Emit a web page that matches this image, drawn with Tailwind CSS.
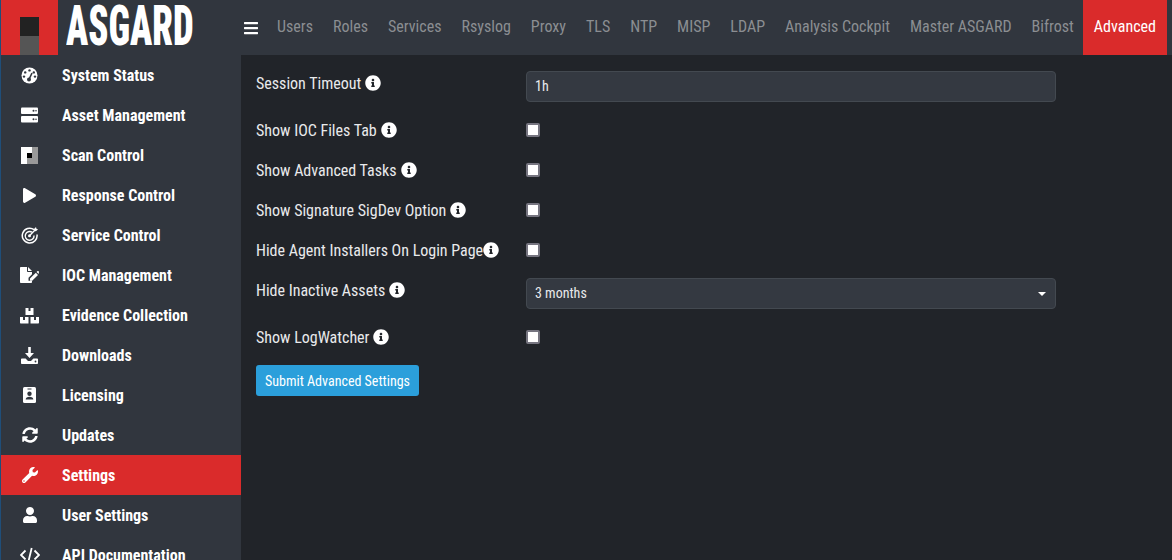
<!DOCTYPE html>
<html lang="en">
  <head>
    <meta charset="UTF-8" />
    <title>ASGARD Settings</title>
    <script src="https://cdn.jsdelivr.net/npm/@tailwindcss/browser@4"></script>
  </head>
  <body class="bg-[#212429] font-['Roboto',sans-serif] [font-stretch:75%] h-[560px] overflow-hidden flex">
    <!-- Sidebar -->
    <aside class="w-[241px] h-[560px] shrink-0 bg-[#31363e] border-l border-[#1f4e79]">
      <div class="h-[55px] flex">
        <div class="w-[57px] h-[55px] shrink-0 bg-[#da2b2b] flex justify-center items-end">
          <div class="w-[19px] h-[38px] flex flex-col">
            <div class="h-[19px] bg-[#222222]"></div>
            <div class="h-[19px] bg-[#555555]"></div>
          </div>
        </div>
        <div class="text-white font-black text-[56px] leading-[52px] h-[55px] w-[170px] shrink-0 whitespace-nowrap ml-2 origin-left scale-x-[0.655]">ASGARD</div>
      </div>
      <nav class="text-white font-bold text-base h-[505px] overflow-hidden">
        <a class="h-10 flex items-center">
          <span class="w-[61px] pr-1 flex justify-center">
            <svg class="w-[17px] h-[17px]" viewBox="0 0 17 17"><circle cx="8.5" cy="8.5" r="8" fill="#fff"/><circle cx="8.5" cy="3.4" r="1.2" fill="#31363e"/><circle cx="4.2" cy="5.4" r="1.2" fill="#31363e"/><circle cx="12.8" cy="5.4" r="1.2" fill="#31363e"/><circle cx="3" cy="9.6" r="1.2" fill="#31363e"/><circle cx="14" cy="9.6" r="1.2" fill="#31363e"/><path d="M8 12.5 11 6" stroke="#31363e" stroke-width="1.6"/><circle cx="8" cy="12.5" r="2" fill="#31363e"/></svg>
          </span>
          <span class="pt-0.5">System Status</span>
        </a>
        <a class="h-10 flex items-center">
          <span class="w-[61px] pr-1 flex justify-center">
            <svg class="w-[17px] h-[16px]" viewBox="0 0 17 16"><rect y="0.5" width="17" height="6.500" rx="1" fill="#fff"/><rect y="9" width="17" height="6.500" rx="1" fill="#fff"/><circle cx="12.500" cy="3.800" r="1" fill="#31363e"/><circle cx="15" cy="3.800" r=".8" fill="#31363e"/><circle cx="12.500" cy="12.200" r="1" fill="#31363e"/><circle cx="15" cy="12.200" r=".8" fill="#31363e"/></svg>
          </span>
          <span class="pt-0.5">Asset Management</span>
        </a>
        <a class="h-10 flex items-center">
          <span class="w-[61px] pr-1 flex justify-center">
            <svg class="w-[17px] h-[17px]" viewBox="0 0 17 17"><rect width="17" height="17" fill="#999"/><rect width="6" height="17" fill="#fff"/><rect width="11" height="6" fill="#fff"/><rect x="6" y="6" width="5" height="5" fill="#000"/></svg>
          </span>
          <span class="pt-0.5">Scan Control</span>
        </a>
        <a class="h-10 flex items-center">
          <span class="w-[61px] pr-1 flex justify-center">
            <svg class="w-[13px] h-[15px]" viewBox="0 0 448 512"><path fill="#fff" d="M424.4 214.7L72.4 6.6C43.8-10.3 0 6.1 0 47.9V464c0 37.5 40.7 60.1 72.4 41.3l352-208c31.4-18.5 31.5-64.1 0-82.6z"/></svg>
          </span>
          <span class="pt-0.5">Response Control</span>
        </a>
        <a class="h-10 flex items-center">
          <span class="w-[61px] pr-1 flex justify-center">
            <svg class="w-[17px] h-[17px]" viewBox="0 0 17 17" fill="none" stroke="#fff"><path stroke-width="1.5" d="M13 2.600A7.400 7.400 0 1 0 16 7.500"/><path stroke-width="1.4" d="M11 5.200A4.400 4.400 0 1 0 13 8.500"/><circle cx="8.500" cy="8.800" r="1.500" fill="#fff" stroke="none"/><path stroke-width="1.3" d="M8.500 8.700 14.500 2.500"/><path fill="#fff" stroke="none" d="M13 2 15 0 15.400 1.800 17 2.200 15 4.200 13.200 3.900z"/></svg>
          </span>
          <span class="pt-0.5">Service Control</span>
        </a>
        <a class="h-10 flex items-center">
          <span class="w-[61px] pr-1 flex justify-center">
            <svg class="w-[19px] h-[16px]" viewBox="0 0 19 16"><path fill="#fff" d="M0 .8C0 .4.4 0 .8 0H7v4.200c0 .4.4.8.8.8H12v2.200L8.500 10.700v3H12V15.200c0 .4-.4.8-.8.8H.8C.4 16 0 15.600 0 15.200zM8 0l4 4H8z"/><path fill="#fff" d="M10 11.500 15.800 5.700 18 7.900 12.200 13.700H10z"/><path fill="#fff" d="M16.500 5 17.300 4.200C17.700 3.900 18.200 3.900 18.600 4.200L18.800 4.500C19.100 4.900 19.100 5.400 18.800 5.700L18.600 6.900z"/></svg>
          </span>
          <span class="pt-0.5">IOC Management</span>
        </a>
        <a class="h-10 flex items-center">
          <span class="w-[61px] pr-1 flex justify-center">
            <svg class="w-[19px] h-[17px]" viewBox="0 0 19 17"><path fill="#fff" d="M5.500 1H8.500V4H10.500V1H13.500V8H5.500zM0 10H3V13H5V10H8.500V16.500H1C.4 16.500 0 16.100 0 15.500zM10.500 10H14V13H16V10H19V15.500C19 16.100 18.600 16.500 18 16.500H10.500z"/></svg>
          </span>
          <span class="pt-0.5">Evidence Collection</span>
        </a>
        <a class="h-10 flex items-center">
          <span class="w-[61px] pr-1 flex justify-center">
            <svg class="w-[17px] h-[17px]" viewBox="0 0 17 17"><path fill="#fff" d="M7.200 0H9.800V6H13L8.500 11 4 6H7.200z"/><path fill="#fff" d="M.8 11.500H4.600L7 14H10L12.400 11.500H16.200C16.600 11.500 17 11.900 17 12.300V16.200C17 16.600 16.600 17 16.200 17H.8C.4 17 0 16.600 0 16.200V12.300C0 11.900.4 11.500.8 11.500z"/><circle cx="14.500" cy="14.500" r=".9" fill="#31363e"/></svg>
          </span>
          <span class="pt-0.5">Downloads</span>
        </a>
        <a class="h-10 flex items-center">
          <span class="w-[61px] pr-1 flex justify-center">
            <svg class="w-[13px] h-[16px]" viewBox="0 0 13 16"><rect width="13" height="16" rx="1.500" fill="#fff"/><rect x="4.500" y="1.500" width="4" height="1" fill="#31363e"/><circle cx="6.500" cy="6.800" r="2.200" fill="#31363e"/><path fill="#31363e" d="M2.700 12.500C2.700 10.500 4.300 9.700 6.500 9.700S10.300 10.500 10.300 12.500z"/></svg>
          </span>
          <span class="pt-0.5">Licensing</span>
        </a>
        <a class="h-10 flex items-center">
          <span class="w-[61px] pr-1 flex justify-center">
            <svg class="w-[16px] h-[16px]" viewBox="0 0 512 512"><path fill="#fff" d="M370.72 133.28C339.458 104.008 298.888 87.962 255.848 88c-77.458.068-144.328 53.178-162.791 126.85-1.344 5.363-6.122 9.15-11.651 9.15H24.103c-7.498 0-13.194-6.807-11.807-14.176C33.933 94.924 134.813 8 256 8c66.448 0 126.791 26.136 171.315 68.685L463.03 40.97C478.149 25.851 504 36.559 504 57.941V192c0 13.255-10.745 24-24 24H345.941c-21.382 0-32.09-25.851-16.971-40.971l41.75-41.749zM32 296h134.059c21.382 0 32.09 25.851 16.971 40.971l-41.75 41.75c31.262 29.273 71.835 45.319 114.876 45.28 77.418-.07 144.315-53.144 162.787-126.849 1.344-5.363 6.122-9.15 11.651-9.15h57.304c7.498 0 13.194 6.807 11.807 14.176C478.067 417.076 377.187 504 256 504c-66.448 0-126.791-26.136-171.315-68.685L48.97 471.03C33.851 486.149 8 475.441 8 454.059V320c0-13.255 10.745-24 24-24z"/></svg>
          </span>
          <span class="pt-0.5">Updates</span>
        </a>
        <a class="h-10 flex items-center bg-[#da2b2b]">
          <span class="w-[61px] pr-1 flex justify-center">
            <svg class="w-[16px] h-[16px]" viewBox="0 0 512 512"><path fill="#fff" d="M507.73 109.1c-2.24-9.03-13.54-12.09-20.12-5.51l-74.36 74.36-67.88-11.31-11.31-67.88 74.36-74.36c6.62-6.62 3.43-17.9-5.66-20.16-47.38-11.74-99.55.91-136.58 37.93-39.64 39.64-50.55 97.1-34.05 147.2L18.74 402.76c-24.99 24.99-24.99 65.51 0 90.5 24.99 24.99 65.51 24.99 90.5 0l213.21-213.21c50.12 16.71 107.47 5.68 147.37-34.22 37.07-37.07 49.7-89.32 37.91-136.73zM64 472c-13.25 0-24-10.75-24-24 0-13.26 10.75-24 24-24s24 10.74 24 24c0 13.25-10.75 24-24 24z"/></svg>
          </span>
          <span class="pt-0.5">Settings</span>
        </a>
        <a class="h-10 flex items-center">
          <span class="w-[61px] pr-1 flex justify-center">
            <svg class="w-[14px] h-[16px]" viewBox="0 0 448 512"><path fill="#fff" d="M224 256c70.7 0 128-57.3 128-128S294.7 0 224 0 96 57.3 96 128s57.3 128 128 128zm89.6 32h-16.7c-22.2 10.2-46.9 16-72.9 16s-50.6-5.8-72.9-16h-16.7C60.2 288 0 348.2 0 422.4V464c0 26.5 21.5 48 48 48h352c26.5 0 48-21.5 48-48v-41.6c0-74.2-60.2-134.4-134.400-134.400z"/></svg>
          </span>
          <span class="pt-0.5">User Settings</span>
        </a>
        <a class="h-10 flex items-center">
          <span class="w-[61px] pr-1 flex justify-center">
            <svg class="w-[20px] h-[16px]" viewBox="0 0 20 16" fill="none" stroke="#fff" stroke-width="1.800"><path d="M5.500 3.500 1 8l4.500 4.500M14.500 3.500 19 8l-4.500 4.500M11.700 1 8.300 15"/></svg>
          </span>
          <span class="pt-0.5">API Documentation</span>
        </a>
      </nav>
    </aside>

    <div class="flex-1 min-w-0">
      <!-- Top tabs -->
      <header class="h-[55px] bg-[#31363e] flex items-stretch text-base text-[#8b8e92]">
        <span class="w-[20px] shrink-0 flex items-center justify-center">
          <svg class="w-[14px] h-[16px]" viewBox="0 0 448 512"><path fill="#fff" d="M16 132h416c8.837 0 16-7.163 16-16V76c0-8.837-7.163-16-16-16H16C7.163 60 0 67.163 0 76v40c0 8.837 7.163 16 16 16zm0 160h416c8.837 0 16-7.163 16-16v-40c0-8.837-7.163-16-16-16H16c-8.837 0-16 7.163-16 16v40c0 8.837 7.163 16 16 16zm0 160h416c8.837 0 16-7.163 16-16v-40c0-8.837-7.163-16-16-16H16c-8.837 0-16 7.163-16 16v40c0 8.837 7.163 16 16 16z"/></svg>
        </span>
        <nav class="flex items-stretch ml-[6px] whitespace-nowrap">
          <a class="px-[10px] pb-0.5 flex items-center">Users</a>
          <a class="px-[10px] pb-0.5 flex items-center">Roles</a>
          <a class="px-[10px] pb-0.5 flex items-center">Services</a>
          <a class="px-[10px] pb-0.5 flex items-center">Rsyslog</a>
          <a class="px-[10px] pb-0.5 flex items-center">Proxy</a>
          <a class="px-[10px] pb-0.5 flex items-center">TLS</a>
          <a class="px-[10px] pb-0.5 flex items-center">NTP</a>
          <a class="px-[10px] pb-0.5 flex items-center">MISP</a>
          <a class="px-[10px] pb-0.5 flex items-center">LDAP</a>
          <a class="px-[10px] pb-0.5 flex items-center">Analysis Cockpit</a>
          <a class="px-[10px] pb-0.5 flex items-center">Master ASGARD</a>
          <a class="px-[10px] pb-0.5 flex items-center">Bifrost</a>
          <a class="ml-[-1px] px-[11px] pb-0.5 flex items-center bg-[#da2b2b] text-white">Advanced</a>
        </nav>
      </header>

      <!-- Advanced settings form -->
      <main class="pl-[15px] pt-2 text-base text-[#e9eaec]">
        <div class="flex py-2">
          <label class="w-[270px] h-6 flex items-center gap-1"><span class="pt-0.5">Session Timeout</span>
            <svg class="w-4 h-4" viewBox="0 0 512 512"><path fill="#fff" d="M256 8C119.043 8 8 119.083 8 256c0 136.997 111.043 248 248 248s248-111.003 248-248C504 119.083 392.957 8 256 8zm0 110c23.196 0 42 18.804 42 42s-18.804 42-42 42-42-18.804-42-42 18.804-42 42-42zm56 254c0 6.627-5.373 12-12 12h-88c-6.627 0-12-5.373-12-12v-24c0-6.627 5.373-12 12-12h12v-64h-12c-6.627 0-12-5.373-12-12v-24c0-6.627 5.373-12 12-12h64c6.627 0 12 5.373 12 12v100h12c6.627 0 12 5.373 12 12v24z"/></svg>
          </label>
          <div class="w-[530px] h-[31px] bg-[#343941] border border-[#434950] rounded text-sm px-2 flex items-center"><span class="pb-0.5">1h</span></div>
        </div>
        <div class="flex py-2">
          <label class="w-[270px] h-6 flex items-center gap-1"><span class="pt-0.5">Show IOC Files Tab</span>
            <svg class="w-4 h-4" viewBox="0 0 512 512"><path fill="#fff" d="M256 8C119.043 8 8 119.083 8 256c0 136.997 111.043 248 248 248s248-111.003 248-248C504 119.083 392.957 8 256 8zm0 110c23.196 0 42 18.804 42 42s-18.804 42-42 42-42-18.804-42-42 18.804-42 42-42zm56 254c0 6.627-5.373 12-12 12h-88c-6.627 0-12-5.373-12-12v-24c0-6.627 5.373-12 12-12h12v-64h-12c-6.627 0-12-5.373-12-12v-24c0-6.627 5.373-12 12-12h64c6.627 0 12 5.373 12 12v100h12c6.627 0 12 5.373 12 12v24z"/></svg>
          </label>
          <div class="h-6 flex items-center"><span class="w-[14px] h-[14px] bg-white border-2 border-[#767580] rounded-[2px]"></span></div>
        </div>
        <div class="flex py-2">
          <label class="w-[270px] h-6 flex items-center gap-1"><span class="pt-0.5">Show Advanced Tasks</span>
            <svg class="w-4 h-4" viewBox="0 0 512 512"><path fill="#fff" d="M256 8C119.043 8 8 119.083 8 256c0 136.997 111.043 248 248 248s248-111.003 248-248C504 119.083 392.957 8 256 8zm0 110c23.196 0 42 18.804 42 42s-18.804 42-42 42-42-18.804-42-42 18.804-42 42-42zm56 254c0 6.627-5.373 12-12 12h-88c-6.627 0-12-5.373-12-12v-24c0-6.627 5.373-12 12-12h12v-64h-12c-6.627 0-12-5.373-12-12v-24c0-6.627 5.373-12 12-12h64c6.627 0 12 5.373 12 12v100h12c6.627 0 12 5.373 12 12v24z"/></svg>
          </label>
          <div class="h-6 flex items-center"><span class="w-[14px] h-[14px] bg-white border-2 border-[#767580] rounded-[2px]"></span></div>
        </div>
        <div class="flex py-2">
          <label class="w-[270px] h-6 flex items-center gap-1"><span class="pt-0.5">Show Signature SigDev Option</span>
            <svg class="w-4 h-4" viewBox="0 0 512 512"><path fill="#fff" d="M256 8C119.043 8 8 119.083 8 256c0 136.997 111.043 248 248 248s248-111.003 248-248C504 119.083 392.957 8 256 8zm0 110c23.196 0 42 18.804 42 42s-18.804 42-42 42-42-18.804-42-42 18.804-42 42-42zm56 254c0 6.627-5.373 12-12 12h-88c-6.627 0-12-5.373-12-12v-24c0-6.627 5.373-12 12-12h12v-64h-12c-6.627 0-12-5.373-12-12v-24c0-6.627 5.373-12 12-12h64c6.627 0 12 5.373 12 12v100h12c6.627 0 12 5.373 12 12v24z"/></svg>
          </label>
          <div class="h-6 flex items-center"><span class="w-[14px] h-[14px] bg-white border-2 border-[#767580] rounded-[2px]"></span></div>
        </div>
        <div class="flex py-2">
          <label class="w-[270px] h-6 flex items-center"><span class="pt-0.5">Hide Agent Installers On Login Page</span>
            <svg class="w-4 h-4" viewBox="0 0 512 512"><path fill="#fff" d="M256 8C119.043 8 8 119.083 8 256c0 136.997 111.043 248 248 248s248-111.003 248-248C504 119.083 392.957 8 256 8zm0 110c23.196 0 42 18.804 42 42s-18.804 42-42 42-42-18.804-42-42 18.804-42 42-42zm56 254c0 6.627-5.373 12-12 12h-88c-6.627 0-12-5.373-12-12v-24c0-6.627 5.373-12 12-12h12v-64h-12c-6.627 0-12-5.373-12-12v-24c0-6.627 5.373-12 12-12h64c6.627 0 12 5.373 12 12v100h12c6.627 0 12 5.373 12 12v24z"/></svg>
          </label>
          <div class="h-6 flex items-center"><span class="w-[14px] h-[14px] bg-white border-2 border-[#767580] rounded-[2px]"></span></div>
        </div>
        <div class="flex py-2">
          <label class="w-[270px] h-6 flex items-center gap-1"><span class="pt-0.5">Hide Inactive Assets</span>
            <svg class="w-4 h-4" viewBox="0 0 512 512"><path fill="#fff" d="M256 8C119.043 8 8 119.083 8 256c0 136.997 111.043 248 248 248s248-111.003 248-248C504 119.083 392.957 8 256 8zm0 110c23.196 0 42 18.804 42 42s-18.804 42-42 42-42-18.804-42-42 18.804-42 42-42zm56 254c0 6.627-5.373 12-12 12h-88c-6.627 0-12-5.373-12-12v-24c0-6.627 5.373-12 12-12h12v-64h-12c-6.627 0-12-5.373-12-12v-24c0-6.627 5.373-12 12-12h64c6.627 0 12 5.373 12 12v100h12c6.627 0 12 5.373 12 12v24z"/></svg>
          </label>
          <div class="w-[530px] h-[31px] bg-[#343941] border border-[#434950] rounded text-sm px-2 flex items-center justify-between">
            <span class="pb-0.5">3 months</span>
            <span class="mr-[1px] border-x-[4px] border-t-[4px] border-x-transparent border-t-white"></span>
          </div>
        </div>
        <div class="flex py-2">
          <label class="w-[270px] h-6 flex items-center gap-1"><span class="pt-0.5">Show LogWatcher</span>
            <svg class="w-4 h-4" viewBox="0 0 512 512"><path fill="#fff" d="M256 8C119.043 8 8 119.083 8 256c0 136.997 111.043 248 248 248s248-111.003 248-248C504 119.083 392.957 8 256 8zm0 110c23.196 0 42 18.804 42 42s-18.804 42-42 42-42-18.804-42-42 18.804-42 42-42zm56 254c0 6.627-5.373 12-12 12h-88c-6.627 0-12-5.373-12-12v-24c0-6.627 5.373-12 12-12h12v-64h-12c-6.627 0-12-5.373-12-12v-24c0-6.627 5.373-12 12-12h64c6.627 0 12 5.373 12 12v100h12c6.627 0 12 5.373 12 12v24z"/></svg>
          </label>
          <div class="h-6 flex items-center"><span class="w-[14px] h-[14px] bg-white border-2 border-[#767580] rounded-[2px]"></span></div>
        </div>
        <button class="mt-2 w-[163px] h-[31px] bg-[#2b9fdb] text-white text-sm rounded-[3px]">Submit Advanced Settings</button>
      </main>
    </div>
  </body>
</html>
